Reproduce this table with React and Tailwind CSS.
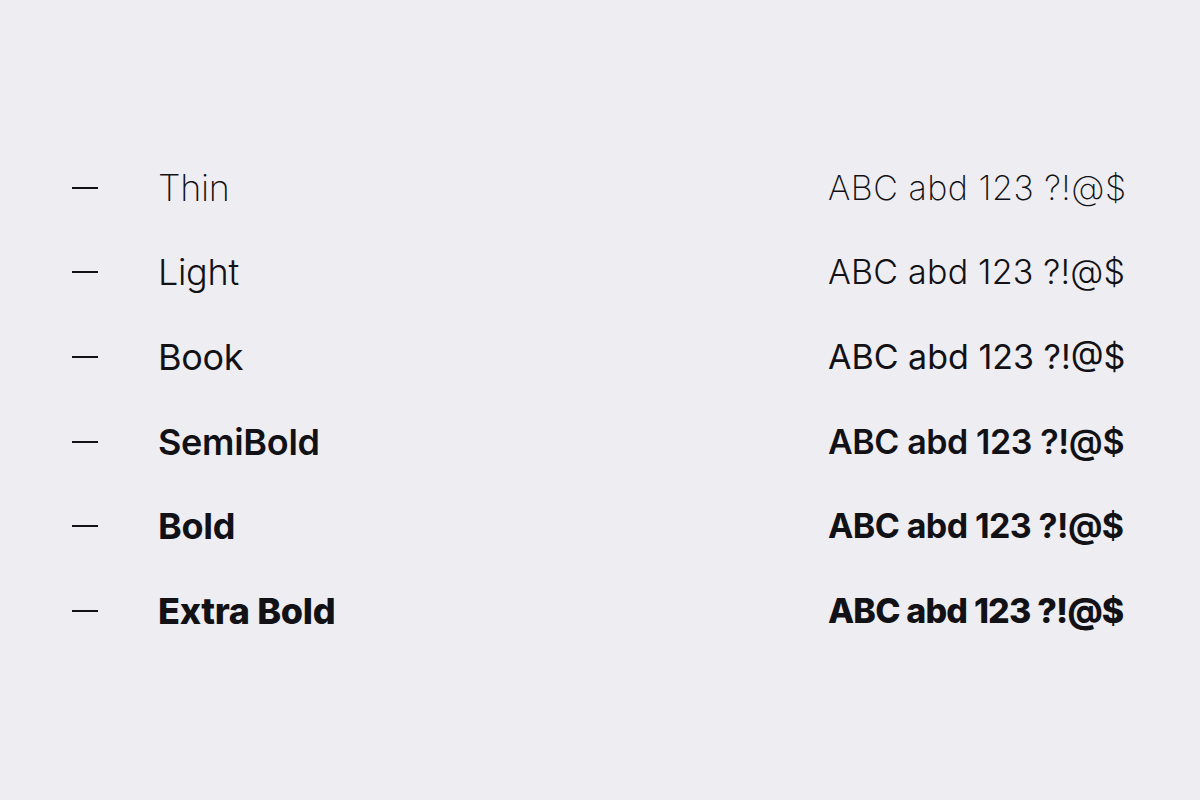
import React from "react";

const weights = [
  { label: "Thin", cls: "font-extralight", track: "tracking-[0.5px]", h: "h-[84px]" },
  { label: "Light", cls: "font-light", track: "tracking-[0.2px]", h: "h-[84px]" },
  { label: "Book", cls: "font-normal", track: "tracking-[0px]", h: "h-[86px]" },
  { label: "SemiBold", cls: "font-semibold", track: "tracking-[-0.4px]", h: "h-[84px]" },
  { label: "Bold", cls: "font-bold", track: "tracking-[-0.6px]", h: "h-[84px]" },
  { label: "Extra Bold", cls: "font-extrabold", track: "tracking-[-0.8px]", h: "h-[86px]" },
];

const App = () => {
  return (
    <div
      className="w-[1200px] h-[800px] bg-[#eeedf2] text-[#121216] pt-[146px]"
      style={{ fontFamily: "Inter, 'Noto Sans', sans-serif" }}
    >
      {weights.map((w) => (
        <div key={w.label} className={`${w.h} flex items-center pl-[72px]`}>
          {/* Dash */}
          <div className="w-[26px] h-[2px] bg-[#121216]" />
          <div className={`ml-[60px] w-[670px] text-[36px] leading-none tracking-[-0.3px] ${w.cls}`}>
            {w.label}
          </div>
          <div className={`text-[34px] leading-none whitespace-nowrap ${w.track} ${w.cls}`}>
            ABC abd 123 ?!@$
          </div>
        </div>
      ))}
    </div>
  );
};

export default App;
